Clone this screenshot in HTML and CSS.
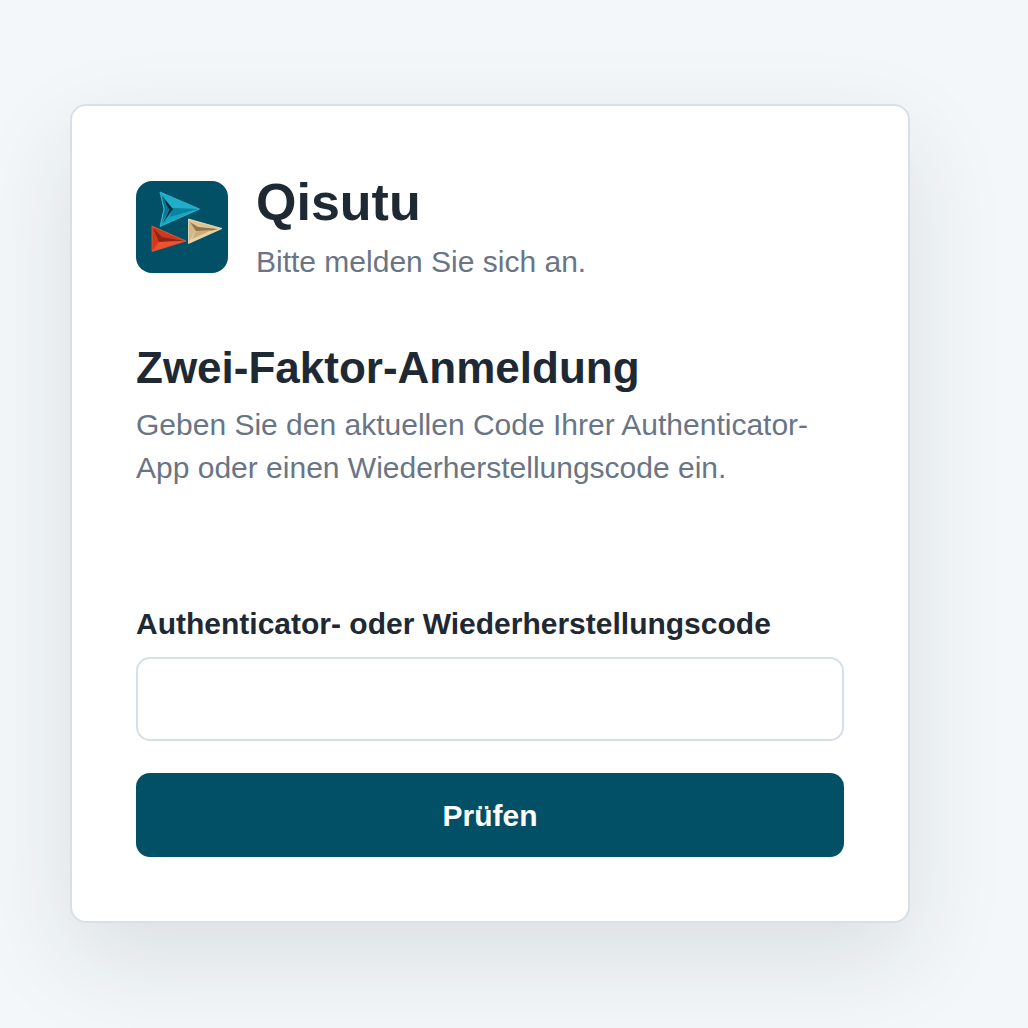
FILE: index.html
```html
<!DOCTYPE html>
<html lang="de">
<head>
    <meta charset="UTF-8">
    <meta name="viewport" content="width=device-width, initial-scale=1.0">
    <title>Qisutu - Zwei-Faktor-Anmeldung</title>
    <link rel="stylesheet" href="styles.css">
</head>
<body>
    <main class="login-card">
        <header class="brand">
            <svg class="brand-logo" viewBox="0 0 92 92" aria-hidden="true">
                <rect width="92" height="92" rx="16" fill="#025066"/>
                <!-- blue arrow -->
                <path d="M24 11 63.5 28 24 45.5 28 28Z" fill="#17a3c1"/>
                <path d="M25 12 62 28 36 27Z" fill="#1fadc9"/>
                <path d="M36 27 62 28 34 36Z" fill="#0b839f"/>
                <path d="M34 36 62 28 27 44Z" fill="#16a5c3"/>
                <path d="M26 15 37 28 27 42 33 29Z" fill="#02303e"/>
                <path d="M25 14 33 28 26 41 29 28Z" fill="#0a6f8a"/>
                <path d="M24 11 63.5 28 24 45.5 28 28Z" fill="none" stroke="#35c4dc" stroke-width=".8"/>
                <!-- red arrow -->
                <path d="M16 45 50 60 16 70.5Z" fill="#e84a27"/>
                <path d="M16 45 24 58 16 70Z" fill="#cb3a1d"/>
                <path d="M17 46 49 60 24 58Z" fill="#c93b1f"/>
                <path d="M17 47 26 56 48 60 23 61Z" fill="#912314"/>
                <path d="M18 69 24 61 48 60Z" fill="#ee5330"/>
                <path d="M16 45 50 60 16 70.5Z" fill="none" stroke="#ee5733" stroke-width=".8"/>
                <!-- sand arrow -->
                <path d="M52.5 38 86 47.5 52.5 62.5Z" fill="#e8d09f"/>
                <path d="M53 39 60 49 53 61Z" fill="#d3b887"/>
                <path d="M53 39 84 47.5 61 47Z" fill="#dec494"/>
                <path d="M54 41 62 46 82 48 74 50 60 50Z" fill="#8f7447"/>
                <path d="M60 50 76 49 56 58Z" fill="#c9ac76"/>
                <path d="M52.5 38 86 47.5 52.5 62.5Z" fill="none" stroke="#f3e2bc" stroke-width=".8"/>
            </svg>
            <div>
                <h1 class="brand-name">Qisutu</h1>
                <p class="text-muted">Bitte melden Sie sich an.</p>
            </div>
        </header>

        <h2 class="section-title">Zwei-Faktor-Anmeldung</h2>
        <p class="text-muted">Geben Sie den aktuellen Code Ihrer Authenticator-App oder einen Wiederherstellungscode ein.</p>

        <form class="login-form" method="post">
            <label class="field-label" for="code">Authenticator- oder Wiederherstellungscode</label>
            <input class="field-input" type="text" id="code" name="code" autocomplete="one-time-code" required>
            <button class="btn" type="submit">Prüfen</button>
        </form>
    </main>
</body>
</html>
```
FILE: styles.css
```css
* {
    box-sizing: border-box;
}
body {
    margin: 0;
    min-height: 100vh;
    padding: 48px 118px 49px 70px;
    display: flex;
    align-items: center;
    justify-content: center;
    background: #f3f7fa;
    color: #1f2933;
    font-family: "Liberation Sans", Arial, sans-serif;
    font-size: 30px;
    line-height: 43px;
}
h1, h2, p {
    margin: 0;
}
.login-card {
    width: 100%;
    max-width: 840px;
    padding: 64px;
    background: #fff;
    border: 2px solid #d8e0e7;
    border-radius: 16px;
    box-shadow: 0 36px 100px rgba(31, 35, 40, 0.11);
}
.brand {
    display: flex;
    align-items: center;
    gap: 28px;
    margin-bottom: 56px;
}
.brand-logo {
    width: 92px;
    height: 92px;
    flex-shrink: 0;
}
.brand-name {
    margin-bottom: 6px;
    font-size: 52px;
    line-height: 64px;
}
.text-muted {
    color: #697586;
}
.section-title {
    margin-bottom: 6px;
    font-size: 44px;
    line-height: 58px;
}
.login-form {
    display: flex;
    flex-direction: column;
    margin-top: 113px;
}
.field-label {
    margin-bottom: 12px;
    font-weight: bold;
}
.field-input {
    width: 100%;
    height: 84px;
    margin-bottom: 32px;
    padding: 0 24px;
    border: 2px solid #d8e0e7;
    border-radius: 14px;
    background: #fff;
    color: inherit;
    font: inherit;
}
.field-input:focus {
    outline: none;
    border-color: #025066;
}
.btn {
    height: 84px;
    border: none;
    border-radius: 14px;
    background: #025066;
    color: #fff;
    font: inherit;
    font-weight: bold;
    cursor: pointer;
}
.btn:hover {
    background: #033f51;
}
```
